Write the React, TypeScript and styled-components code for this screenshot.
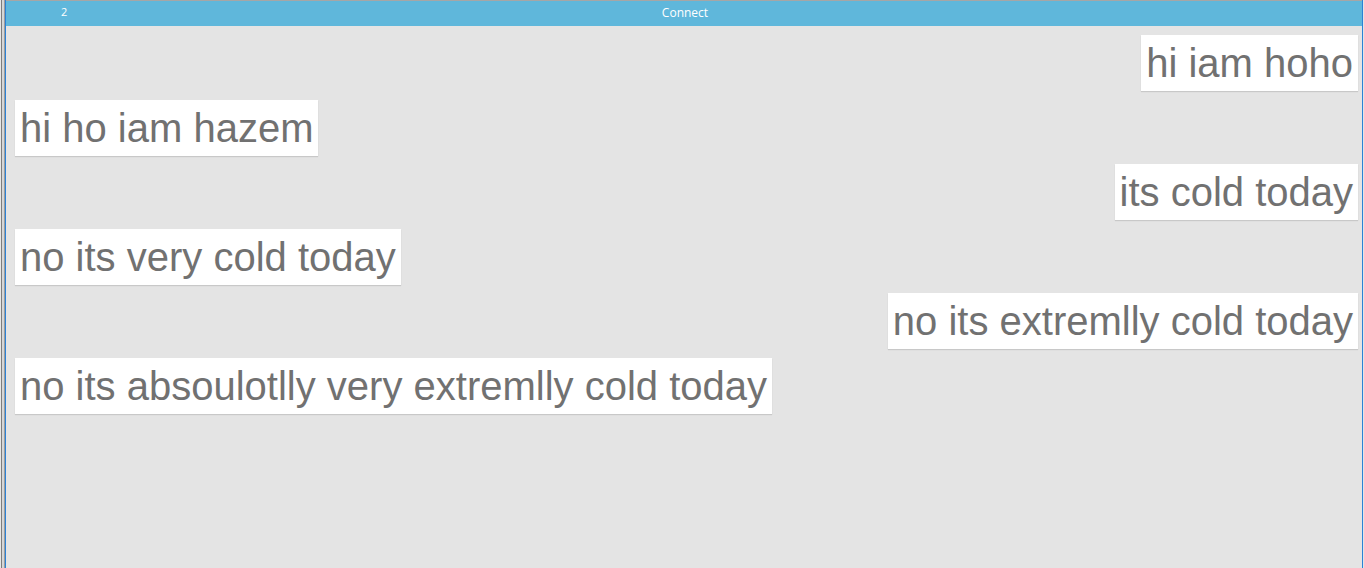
import styled, { createGlobalStyle } from "styled-components";

const GlobalStyle = createGlobalStyle`
  html, body {
    margin: 0;
    padding: 0;
    background: #e4e4e4;
    overflow: hidden;
  }
`;

const Frame = styled.div`
  display: flex;
  width: 1364px;
  height: 568px;
  background: #e4e4e4;
`;

const LeftEdge = styled.div`
  width: 5px;
  flex-shrink: 0;
  background: linear-gradient(
    to right,
    #e6e6e6 0 1px,
    #7c7c7c 1px 2px,
    #d6d6d6 2px 4px,
    #9c9c9c 4px 5px
  );
`;

const Window = styled.div`
  flex: 1;
  display: flex;
  flex-direction: column;
  border-left: 1px solid #2b82d6;
  border-right: 1px solid #2b82d6;
  margin-right: 1px;
  min-width: 0;
`;

const TitleBar = styled.header`
  height: 25px;
  border-top: 1px solid #a6a6a6;
  background: #5fb7db;
  display: grid;
  grid-template-columns: 120px 1fr 120px;
  align-items: center;
  color: #fff;
  font-family: "Open Sans", "DejaVu Sans", sans-serif;
  font-size: 12px;
`;

const Count = styled.span`
  padding-left: 55px;
  font-size: 11px;
  margin-top: -5px;
`;

const Title = styled.span`
  text-align: center;
  margin-left: 2px;
  margin-top: -2px;
`;

const Messages = styled.main`
  flex: 1;
  display: flex;
  flex-direction: column;
  gap: 8.5px;
  padding: 9px 4px 0 9px;
`;

const Bubble = styled.div<{ mine: boolean }>`
  align-self: ${(props) => (props.mine ? "flex-end" : "flex-start")};
  background: #fff;
  color: #717171;
  font-family: "Liberation Sans", Arial, sans-serif;
  font-size: 40px;
  line-height: 46px;
  padding: 5px;
  box-shadow: 0 1px 1px rgba(0, 0, 0, 0.12);
  white-space: nowrap;
`;

const messages = [
  { text: "hi iam hoho", mine: true },
  { text: "hi ho iam hazem", mine: false },
  { text: "its cold today", mine: true },
  { text: "no its very cold today", mine: false },
  { text: "no its extremlly cold today", mine: true },
  { text: "no its absoulotlly very extremlly cold today", mine: false },
];

const App = () => {
  return (
    <>
      <GlobalStyle />
      <Frame>
        <LeftEdge />
        <Window>
          <TitleBar>
            <Count>2</Count>
            <Title>Connect</Title>
            <span />
          </TitleBar>
          <Messages>
            {messages.map((msg, index) => (
              <Bubble key={index} mine={msg.mine}>
                {msg.text}
              </Bubble>
            ))}
          </Messages>
        </Window>
      </Frame>
    </>
  );
};

export default App;
